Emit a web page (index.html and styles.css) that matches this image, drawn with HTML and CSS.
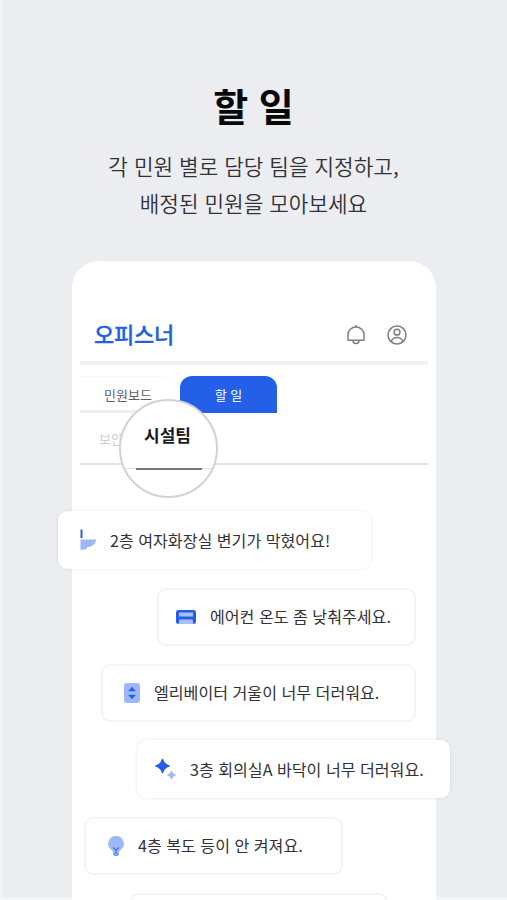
FILE: index.html
```html
<!DOCTYPE html>
<html lang="ko">
<head>
<meta charset="utf-8">
<title>할 일</title>
<link rel="stylesheet" href="styles.css">
</head>
<body>
<header class="intro">
  <h1>할 일</h1>
  <p>각 민원 별로 담당 팀을 지정하고,<br>배정된 민원을 모아보세요</p>
</header>
<main class="phone">
  <div class="bar">
    <span class="logo">오피스너</span>
    <svg class="bell" width="20" height="22" viewBox="0 0 20 22" fill="none" stroke="#7b7f87" stroke-width="1.5"><path d="M2 16.200V10.800a8 7.800 0 0 1 16 0v5.400Z" stroke-linejoin="round"/><path d="M10 1v2M7 16.500a3 3 0 0 0 6 0"/></svg>
    <svg class="user" width="20" height="20" viewBox="0 0 20 20" fill="none" stroke="#7b7f87" stroke-width="1.5"><circle cx="10" cy="10" r="9"/><circle cx="10" cy="7.200" r="2.900"/><path d="M4.500 17c0-6 11-6 11 0"/></svg>
  </div>
  <nav class="tabs">
    <span class="tab">민원보드</span>
    <span class="tab active">할 일</span>
  </nav>
  <div class="teams">
    <span class="team">보안팀</span>
    <div class="lens"><b>시설팀</b><i></i></div>
  </div>
  <section class="list">
    <article class="card c1">
      <svg width="18" height="22" viewBox="0 0 18 22"><path d="M1.500 .5h2V9h-2Z" fill="#245fe6"/><path d="M1.500 10.500H17c0 4-3 7-8 7.500-1 .3-1 1.300-2 2.200L1.500 21Z" fill="#9db8f6"/></svg>
      <span>2층 여자화장실 변기가 막혔어요!</span>
    </article>
    <article class="card c2">
      <svg width="22" height="16" viewBox="0 0 22 16"><rect x="1" y="1" width="20" height="14" rx="2.500" fill="#245fe6"/><path d="M4 3.500h14v4H4ZM4.500 10.500h13l1 4.500h-15Z" fill="#a5bff9"/></svg>
      <span>에어컨 온도 좀 낮춰주세요.</span>
    </article>
    <article class="card c3">
      <svg width="18" height="22" viewBox="0 0 18 22"><rect x="1" y="1" width="16" height="20" rx="3" fill="#9db8f6"/><path d="M9 5l3.400 4H5.600ZM9 17l3.400-4H5.600Z" fill="#245fe6" stroke="#245fe6" stroke-width=".5" stroke-linejoin="round"/></svg>
      <span>엘리베이터 거울이 너무 더러워요.</span>
    </article>
    <article class="card c4">
      <svg width="22" height="22" viewBox="0 0 22 22"><path d="M7.500 1.500Q8.900 6.600 14 8 8.900 9.400 7.500 14.500 6.100 9.400 1 8 6.100 6.600 7.500 1.500Z" fill="#245fe6" stroke="#245fe6" stroke-width="1.500" stroke-linejoin="round"/><path d="M16.500 13Q17 16 20.500 17 17 18 16.500 21 16 18 12.500 17 16 16 16.500 13Z" fill="#9db8f6" stroke="#9db8f6" stroke-linejoin="round"/></svg>
      <span>3층 회의실A 바닥이 너무 더러워요.</span>
    </article>
    <article class="card c5">
      <svg width="18" height="22" viewBox="0 0 18 22"><path d="M9 1a7.700 7.700 0 0 1 4.500 14c-1.500 1-1.500 1.500-1.500 3H6c0-1.500 0-2-1.500-3A7.700 7.700 0 0 1 9 1Z" fill="#9db8f6"/><path d="M6 12.500l3 2.500 3-2.500M9 15v3" fill="none" stroke="#3f72ea" stroke-width="1.300"/><path d="M6 18h6v1.500L10.800 21H7.200L6 19.500Z" fill="#7aa0f5"/></svg>
      <span>4층 복도 등이 안 켜져요.</span>
    </article>
    <article class="card c6"></article>
  </section>
</main>
</body>
</html>
```

FILE: styles.css
```css
* { box-sizing: border-box; }
body {
  margin: 0;
  height: 900px;
  overflow: hidden;
  background:
    linear-gradient(#f3f4f8, #f3f4f8) 0 100% / 100% 3px no-repeat,
    linear-gradient(#f1f2f6, #f1f2f6) 0 0 / 3px 100% no-repeat,
    #ecedf1;
  font-family: "Noto Sans CJK KR", sans-serif;
  color: #303237;
}
.intro { height: 261px; padding-top: 77px; text-align: center; }
h1 { margin: 0; font-size: 38px; line-height: 56px; font-weight: 700; color: #08090b; }
.intro p { margin: 14px 0 0; font-size: 21.300px; line-height: 37px; font-weight: 350; }
.phone {
  width: 364px;
  height: 639px;
  margin-left: 72px;
  background: #fff;
  border-radius: 27px 27px 0 0;
}
.bar {
  display: flex;
  align-items: center;
  height: 104px;
  margin: 0 8px;
  padding: 45px 21px 0 14px;
  border-bottom: 4px solid #f1f1f2;
}
.logo {
  flex: 1;
  margin-top: -1px;
  font-size: 22px;
  line-height: 30px;
  font-weight: 500;
  color: #245fe0;
  letter-spacing: -.2px;
  -webkit-text-stroke: .3px #245fe0;
}
.bell { margin: 2px 21px 0 0; }
.user { margin-top: 2px; }
.tabs { display: flex; gap: 4px; height: 48px; margin: 0 8px; padding-top: 11px; }
.tab {
  width: 96px;
  height: 37px;
  border-top: 1px solid #f8f8f9;
  border-bottom: 3px solid #efeff0;
  border-radius: 0 12px 0 0;
  font-size: 13px;
  line-height: 35px;
  text-align: center;
  color: #5d6067;
}
.tab.active { width: 97px; border: 0; border-radius: 12px 12px 0 0; background: #245fe8; color: #fff; line-height: 37px; }
.teams { position: relative; height: 52px; margin: 0 8px; border-bottom: 2px solid #e3e3e4; }
.team { display: block; padding: 16px 0 0 19px; font-size: 13px; line-height: 20px; color: #cfcfd1; }
.lens {
  position: absolute;
  left: 39px;
  top: -14px;
  width: 99px;
  height: 99px;
  border: 2px solid #d2d2d3;
  border-radius: 50%;
  background: linear-gradient(#e4e4e5, #e4e4e5) 0 67px / 100% 1px no-repeat #fff;
  text-align: center;
}
.lens b { display: block; padding-top: 20px; margin-left: -2px; font-size: 17px; line-height: 28px; font-weight: 700; color: #17191d; }
.lens i { display: block; width: 66px; height: 2px; margin: 19px auto 0; background: #77777a; }
.list {
  display: grid;
  grid-auto-rows: 58px;
  gap: 18.300px;
  height: 435px;
  padding-top: 46.400px;
  overflow-x: visible;
  overflow-y: clip;
}
.card {
  display: flex;
  align-items: center;
  border: 2px solid #f4f4f5;
  border-radius: 9px;
  background: #fff;
  font-size: 16.100px;
  line-height: 24px;
  white-space: nowrap;
}
.card svg { flex: none; }
.card span { margin-top: -1px; }
.c1, .c4 { border-color: #fff; box-shadow: 0 0 3px #0000001f; }
.c1 { width: 313px; margin-left: -14px; padding-left: 19px; }
.c1 svg { margin-right: 13px; }
.c2 { width: 259px; margin-left: 85px; padding-left: 16px; }
.c2 svg { margin-right: 13px; }
.c3 { width: 315px; margin-left: 29px; padding-left: 20px; }
.c3 svg { margin-right: 13px; }
.c4 { width: 313px; margin-left: 65px; padding-left: 16px; }
.c4 svg { margin-right: 13px; }
.c5 { width: 259px; margin-left: 12px; padding-left: 21px; }
.c5 svg { margin-right: 13px; }
.c6 { width: 259px; margin-left: 57px; }
```
